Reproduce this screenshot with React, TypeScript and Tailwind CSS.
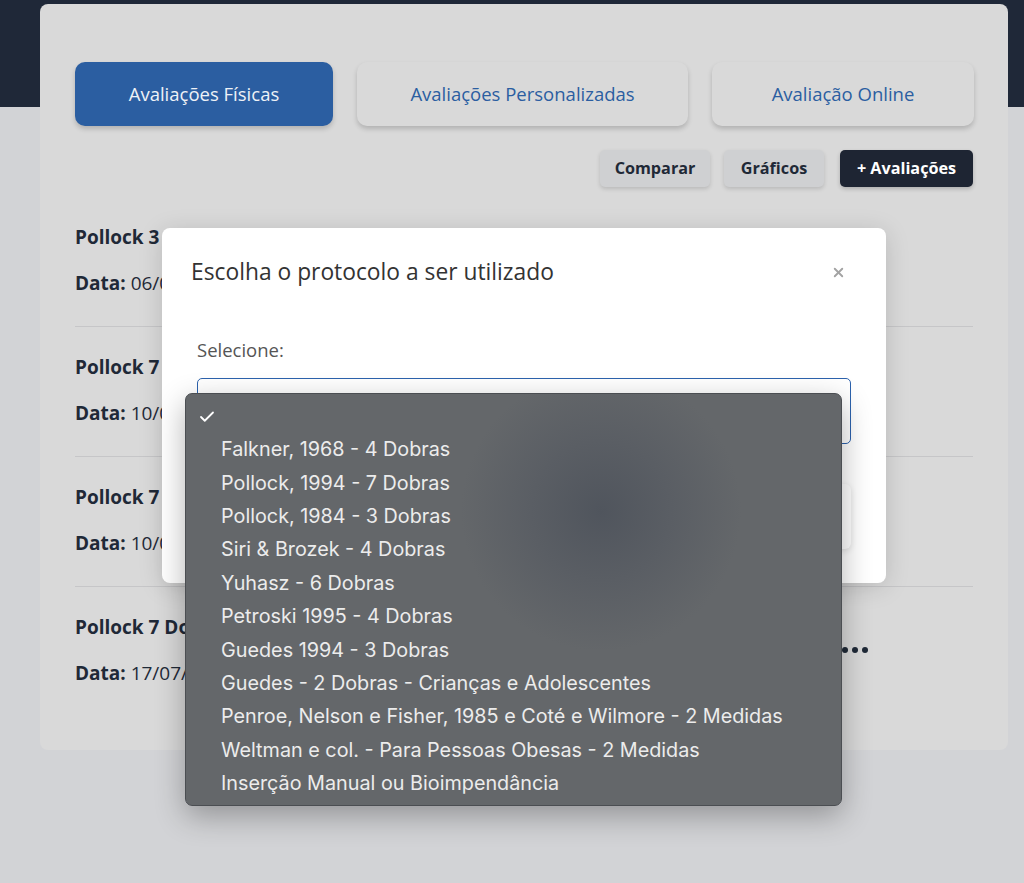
import { Check, X } from "lucide-react";

const items = [
  { title: "Pollock 3 Dobras", date: "06/08/2023" },
  { title: "Pollock 7 Dobras", date: "10/07/2023" },
  { title: "Pollock 7 Dobras", date: "10/07/2023" },
  { title: "Pollock 7 Dobras", date: "17/07/2023" },
];

const protocols = [
  "Falkner, 1968 - 4 Dobras",
  "Pollock, 1994 - 7 Dobras",
  "Pollock, 1984 - 3 Dobras",
  "Siri & Brozek - 4 Dobras",
  "Yuhasz - 6 Dobras",
  "Petroski 1995 - 4 Dobras",
  "Guedes 1994 - 3 Dobras",
  "Guedes - 2 Dobras - Crianças e Adolescentes",
  "Penroe, Nelson e Fisher, 1985 e Coté e Wilmore - 2 Medidas",
  "Weltman e col. - Para Pessoas Obesas - 2 Medidas",
  "Inserção Manual ou Bioimpendância",
];

export default function App() {
  return (
    <div className="relative min-h-[883px] overflow-hidden bg-[linear-gradient(#1f2838_0_107px,#d2d3d6_107px)] pt-[4px] font-['Open_Sans','Liberation_Sans',sans-serif] text-[#1f2937]">
      {/* main card */}
      <div className="ml-[40px] mr-[16px] h-[746px] rounded-[8px] bg-[#d9d9d9] px-[35px] pt-[58px]">
        <div className="flex gap-[24px]">
          <button className="h-[64px] w-[258px] shrink-0 rounded-[10px] bg-[#2b5ea1] text-[18.5px] text-[#eef2f7] shadow-[0_3px_5px_rgba(0,0,0,0.18)]">
            Avaliações Físicas
          </button>
          <button className="h-[64px] w-[331px] shrink-0 rounded-[10px] bg-[#d9d9d9] text-[18.5px] text-[#2b5ea1] shadow-[0_3px_5px_rgba(0,0,0,0.18)]">
            Avaliações Personalizadas
          </button>
          <button className="h-[64px] w-[262px] shrink-0 rounded-[10px] bg-[#d9d9d9] text-[18.5px] text-[#2b5ea1] shadow-[0_3px_5px_rgba(0,0,0,0.18)]">
            Avaliação Online
          </button>
        </div>

        <div className="mt-[24px] flex justify-end">
          <button className="h-[37px] w-[110px] rounded-[5px] bg-[#cfd0d2] text-[16.2px] font-bold shadow-[0_2px_4px_rgba(0,0,0,0.15)]">
            Comparar
          </button>
          <button className="ml-[14px] h-[37px] w-[100px] rounded-[5px] bg-[#cfd0d2] text-[16.2px] font-bold shadow-[0_2px_4px_rgba(0,0,0,0.15)]">
            Gráficos
          </button>
          <button className="ml-[16px] h-[37px] w-[133px] rounded-[5px] bg-[#1e2533] text-[16.2px] font-bold text-white shadow-[0_2px_4px_rgba(0,0,0,0.2)]">
            + Avaliações
          </button>
        </div>

        <div className="mt-[10px]">
          {items.map((it, i) => (
            <div
              key={i}
              className={
                "flex items-center justify-between pt-[28px] " +
                (i < items.length - 1 ? "border-b border-[#c6c6c8] pb-[31px]" : "pb-[32px]")
              }
            >
              <div className="flex flex-col gap-[22px] text-[19px] leading-[24px]">
                <p className="font-bold">{it.title}</p>
                <p>
                  <span className="font-bold">Data:</span> {it.date}
                </p>
              </div>
              <div className="mr-[105px] flex gap-[4px]">
                <span className="h-[6px] w-[6px] rounded-full bg-[#1f2937]" />
                <span className="h-[6px] w-[6px] rounded-full bg-[#1f2937]" />
                <span className="h-[6px] w-[6px] rounded-full bg-[#1f2937]" />
              </div>
            </div>
          ))}
        </div>
      </div>

      {/* modal */}
      <div className="absolute left-[162px] top-[228px] h-[355px] w-[724px] rounded-[8px] bg-white shadow-[0_4px_24px_rgba(0,0,0,0.15)]">
        <div className="flex items-center justify-between pl-[29px] pr-[40px] pt-[29px]">
          <h2 className="text-[22.8px] leading-[30px] text-[#333]">Escolha o protocolo a ser utilizado</h2>
          <X size={15} strokeWidth={3} className="text-[#a3a3a3]" />
        </div>
        <div className="px-[35px] pt-[51px]">
          <p className="text-[18.5px] leading-[24px] text-[#555]">Selecione:</p>
          <div className="mt-[16px] flex h-[66px] items-center justify-end rounded-[5px] border border-[#2c62ad] pr-[8px]">
            <svg width="10" height="10" viewBox="0 0 10 10" className="text-[#444]">
              <path d="M2 3.5 L5 6.5 L8 3.5" fill="none" stroke="currentColor" strokeWidth="1.5" />
            </svg>
          </div>
          <div className="mt-[40px] h-[65px] rounded-[6px] bg-white shadow-[0_2px_6px_rgba(0,0,0,0.12)]" />
        </div>
      </div>

      {/* native select popup */}
      <div className="absolute left-[185px] top-[393px] h-[413px] w-[657px] rounded-[7px] border border-[#4b4e52] bg-[radial-gradient(circle_at_415px_117px,#50555d_0px,#5a5e64_70px,#64676a_140px)] py-[6px] font-['Inter','Roboto',sans-serif] text-[19.8px] text-[#ececec] shadow-[0_10px_30px_rgba(0,0,0,0.3)]">
        <div className="flex h-[33.4px] items-center pl-[12px]">
          <Check size={18} strokeWidth={2.4} className="text-white" />
        </div>
        {protocols.map((p) => (
          <div key={p} className="flex h-[33.4px] items-center pl-[35px]">
            {p}
          </div>
        ))}
      </div>
    </div>
  );
}
